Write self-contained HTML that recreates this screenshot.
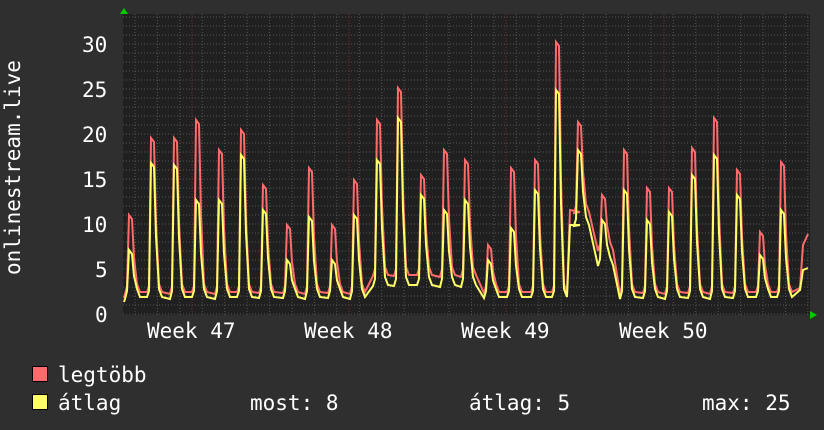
<!DOCTYPE html>
<html><head><meta charset="utf-8"><style>
html,body{margin:0;padding:0;background:#2f2f2f;}
body{width:824px;height:430px;position:relative;overflow:hidden;font-family:"DejaVu Sans Mono","Liberation Mono",monospace;color:#fff;}
.t{position:absolute;font-size:21px;line-height:20px;white-space:pre;}
</style></head><body>
<svg id="g" width="824" height="430" style="position:absolute;left:0;top:0">
<rect x="123" y="14" width="687" height="301" fill="#202020"/>
<g id="grid"></g>
<path id="red" fill="none" stroke="#ff6b6b" stroke-width="2"/>
<path id="yel" fill="none" stroke="#ffff66" stroke-width="2"/>
<polygon points="120,14 128,14 124,8" fill="#00cc00"/>
<polygon points="810,311 810,319 817,315" fill="#00cc00"/>
</svg>
<div class="t" style="left:82px;top:35px;">30</div>
<div class="t" style="left:82px;top:80px;">25</div>
<div class="t" style="left:82px;top:125px;">20</div>
<div class="t" style="left:82px;top:170px;">15</div>
<div class="t" style="left:82px;top:215px;">10</div>
<div class="t" style="left:95px;top:260px;">5</div>
<div class="t" style="left:95px;top:305px;">0</div>
<div class="t" style="left:147px;top:321px;">Week 47</div>
<div class="t" style="left:304px;top:321px;">Week 48</div>
<div class="t" style="left:461px;top:321px;">Week 49</div>
<div class="t" style="left:619px;top:321px;">Week 50</div>
<div class="t" style="transform:rotate(-90deg);transform-origin:0 0;left:3px;top:275px;">onlinestream.live</div>
<div style="position:absolute;left:32px;top:366px;width:14px;height:14px;background:#ff6b6b;border:1px solid #000"></div>
<div style="position:absolute;left:32px;top:394px;width:14px;height:14px;background:#ffff66;border:1px solid #000"></div>
<div class="t" style="left:58px;top:365px;">legtöbb</div>
<div class="t" style="left:58px;top:393px;">átlag</div>
<div class="t" style="left:250px;top:393px;">most: 8</div>
<div class="t" style="left:469px;top:393px;">átlag: 5</div>
<div class="t" style="left:702px;top:393px;">max: 25</div>
<script>
var g=document.getElementById("grid"),h="";
for(var y=17;y<315;y+=9){var red=((315-y)%45===0);h+='<line x1="123" x2="810" y1="'+y+'" y2="'+y+'" stroke="'+(red?'#7a3030':'#555')+'" stroke-dasharray="1,2"/>';}
for(var x=135;x<810;x+=22.43){h+='<line y1="14" y2="315" x1="'+x+'" x2="'+x+'" stroke="#555" stroke-dasharray="1,2"/>';}
[192,349,506,664].forEach(function(x){h+='<line y1="14" y2="315" x1="'+x+'" x2="'+x+'" stroke="#7a3030" stroke-dasharray="1,2"/>';});
g.innerHTML=h;
var P=[[131,215,250],[153,138,163],[176,138,165],[198,120,200],[221,150,200],[243,130,155],[265,185,210],[289,225,260],[311,168,217],[334,225,260],[356,180,215],[379,120,160],[400,88,118],[423,175,195],[446,150,210],[467,160,200],[490,245,260],[513,168,228],[537,160,190],[558,42,90],[580,122,150],[604,195,220],[626,150,190],[649,188,220],[671,188,212],[694,148,175],[716,118,155],[739,170,195],[762,232,255],[783,162,210]];
function base(x,k){if(x>360&&x<470)return k?285:275;if(x>560&&x<595)return k?225:212;if(x>595&&x<605)return k?265:250;return k?297:292;}
function build(k){var d="M124,"+(k?302:298);
P.forEach(function(p){var x=p[0],t=p[1+k];var b=base(x,k);
d+=" L"+(x-6)+","+(b+(x%3)) +" L"+(x-4)+","+(b-6)+" L"+(x-2)+","+t+" L"+(x+1)+","+(t+4)+" L"+(x+3)+","+(t+(b-t)*0.55)+" L"+(x+6)+","+(b-8)+" L"+(x+9)+","+b;
if(x===558){d+=" L570,"+(k?225:210)+" L580,"+(k?225:212);}
});
d+=" L800,"+(k?290:288)+" L803,"+(k?270:245)+" L808,"+(k?268:234);return d;}
document.getElementById("red").setAttribute("d",build(0));
document.getElementById("yel").setAttribute("d",build(1));
</script>
</body></html>
